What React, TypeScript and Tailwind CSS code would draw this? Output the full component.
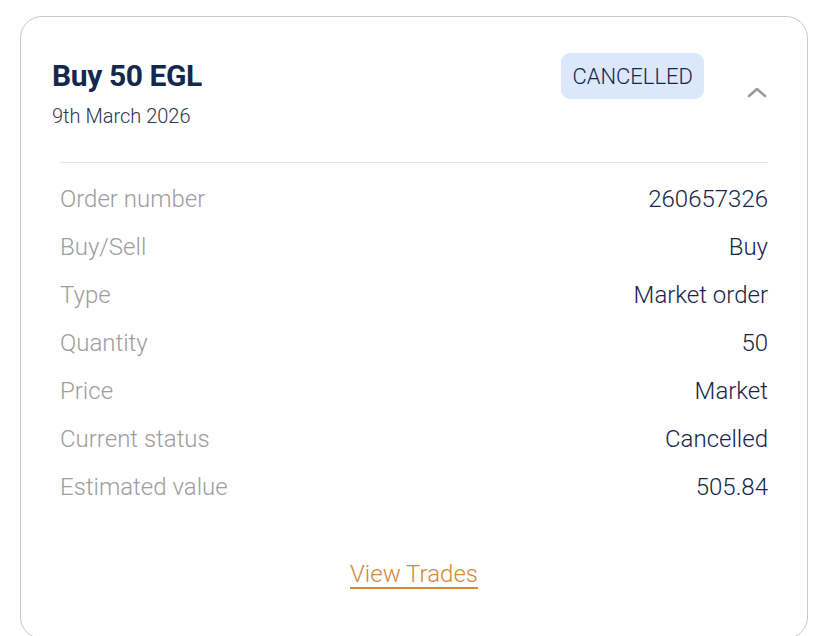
import React from "react";

const rows = [
  { label: "Order number", value: "260657326" },
  { label: "Buy/Sell", value: "Buy" },
  { label: "Type", value: "Market order" },
  { label: "Quantity", value: "50" },
  { label: "Price", value: "Market" },
  { label: "Current status", value: "Cancelled" },
  { label: "Estimated value", value: "505.84" },
];

const App = () => {
  return (
    <div className="min-h-screen bg-white pt-[16px] px-[20px] font-['Roboto',sans-serif] overflow-hidden h-[636px]">
      <div className="w-[788px] h-[623px] rounded-[22px] border border-[#c9c9c9] bg-white">
        {/* Header */}
        <div className="flex items-center h-[145px] pl-[31px] pr-[39px]">
          <div className="flex flex-col mt-[6px]">
            <div className="text-[30px] leading-[36px] font-bold text-[#12284f] tracking-[-0.4px]">
              Buy 50 EGL
            </div>
            <div className="mt-[10px] text-[20px] leading-[24px] font-light text-[#2a3550]">
              9th March 2026
            </div>
          </div>
          <div className="ml-auto self-start mt-[36px] rounded-[9px] bg-[#dbe7fb] px-[11px] h-[46px] flex items-center">
            <span className="text-[22px] font-light text-[#16264a]">CANCELLED</span>
          </div>
          <div className="ml-[42px] mt-[4px]">
            <svg width="22" height="14" viewBox="0 0 22 14" fill="none">
              <path d="M3 11 L11 4 L19 11" stroke="#9a9a9a" strokeWidth="2.6" strokeLinecap="round" strokeLinejoin="round" />
            </svg>
          </div>
        </div>

        {/* Details */}
        <div className="mx-[39px] border-t border-[#e3e3e3] pt-[12px]">
          {rows.map((r) => (
            <div key={r.label} className="flex items-center justify-between h-[48px]">
              <span className="text-[24px] font-light text-[#9d9d9d]">{r.label}</span>
              <span className="text-[24px] font-light text-[#15254a]">{r.value}</span>
            </div>
          ))}
        </div>

        <div className="flex justify-center mt-[45px]">
          <a href="#" className="text-[24px] font-light text-[#d5873a] underline underline-offset-[5px] decoration-[1.5px]">
            View Trades
          </a>
        </div>
      </div>
    </div>
  );
};

export default App;
